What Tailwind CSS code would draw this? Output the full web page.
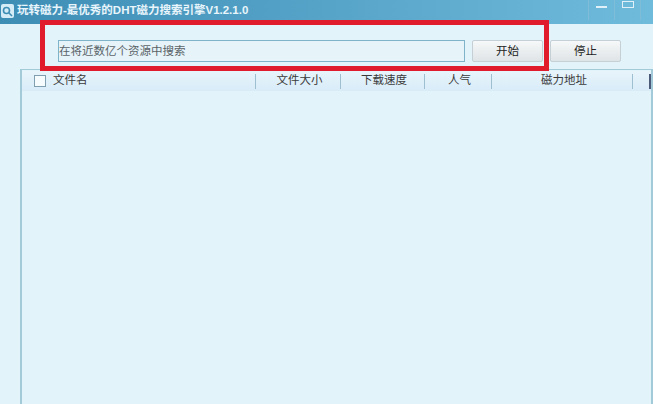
<!DOCTYPE html>
<html lang="zh">
<head>
    <meta charset="UTF-8">
    <title>玩转磁力</title>
    <script src="https://cdn.jsdelivr.net/npm/@tailwindcss/browser@4"></script>
</head>
<body class="relative w-[653px] h-[404px] overflow-hidden bg-[#e3f3fa] font-['Liberation_Sans','Noto_Sans_CJK_SC',sans-serif] text-[11.5px] text-[#3a3a3a]">
    <!-- title bar -->
    <div class="flex items-start h-[24px] bg-gradient-to-r from-[#3d8db5] to-[#6fbbdc]">
        <div class="ml-[1px] mr-[3px] mt-[4px] w-[13px] h-[14px] rounded-[2px] bg-[#d5ecf6] flex items-center justify-center">
            <svg width="11" height="11" viewBox="0 0 11 11" fill="none" stroke="#3d8db5" stroke-width="1.6"><circle cx="4.5" cy="4.5" r="3"/><path d="M7 7l3 3"/></svg>
        </div>
        <span class="mt-[2px] text-[11.5px] font-bold text-[#e8f5fb] whitespace-nowrap">玩转磁力-最优秀的DHT磁力搜索引擎V1.2.1.0</span>
        <div class="ml-auto mr-[12px] flex h-[20px]">
            <div class="w-[26px] border-l border-[#7fbcd8] flex justify-center pt-[6px]"><div class="w-[11px] h-[2px] bg-[#dff0f8]"></div></div>
            <div class="w-[27px] border-l border-r border-[#7fbcd8] flex justify-center pt-[1px]"><div class="w-[12px] h-[7px] border border-[#dff0f8]"></div></div>
        </div>
    </div>

    <!-- search row -->
    <div class="flex gap-[7px] pl-[58px] pt-[16px] h-[45px]">
        <div class="flex items-center w-[407px] h-[22px] pt-[1px] border border-[#7fb3c9] bg-[#e6f3f9] text-[#5a6468]">在将近数亿个资源中搜索</div>
        <button class="w-[71px] h-[22px] pt-[1px] rounded-[2px] border border-[#c4d0d6] bg-gradient-to-b from-[#f6f8f9] to-[#dfe4e6] text-[#222]">开始</button>
        <button class="w-[71px] h-[22px] pt-[1px] rounded-[2px] border border-[#c4d0d6] bg-gradient-to-b from-[#f6f8f9] to-[#dfe4e6] text-[#222]">停止</button>
    </div>

    <!-- file list -->
    <div class="ml-[20px] h-[335px] border-x-2 border-t border-[#a3cad9]">
        <div class="flex items-center h-[20px] mt-[1px] bg-gradient-to-b from-[#e8f4fb] to-[#d8ecf8]">
            <div class="flex items-center w-[234px] pl-[12px] gap-[7px] h-[15px] border-r border-[#9dbfd0]">
                <div class="w-[12px] h-[12px] border border-[#7f9fb0] bg-[#f6fbfd]"></div>
                <span>文件名</span>
            </div>
            <div class="flex items-center justify-center w-[85px] pl-[3px] h-[15px] border-r border-[#9dbfd0]">文件大小</div>
            <div class="flex items-center justify-center w-[84px] pl-[3px] h-[15px] border-r border-[#9dbfd0]">下载速度</div>
            <div class="flex items-center justify-center w-[67px] pl-[3px] h-[15px] border-r border-[#9dbfd0]">人气</div>
            <div class="flex items-center justify-center w-[141px] pl-[4px] h-[15px] border-r border-[#9dbfd0]">磁力地址</div>
            <div class="ml-auto w-[2px] h-[15px] bg-[#4a5a78]"></div>
        </div>
    </div>

    <!-- red highlight drawn over the screenshot -->
    <div class="absolute left-[40px] top-[20px] w-[509px] h-[51px] border-[5px] border-[#e01b2c]"></div>
</body>
</html>
